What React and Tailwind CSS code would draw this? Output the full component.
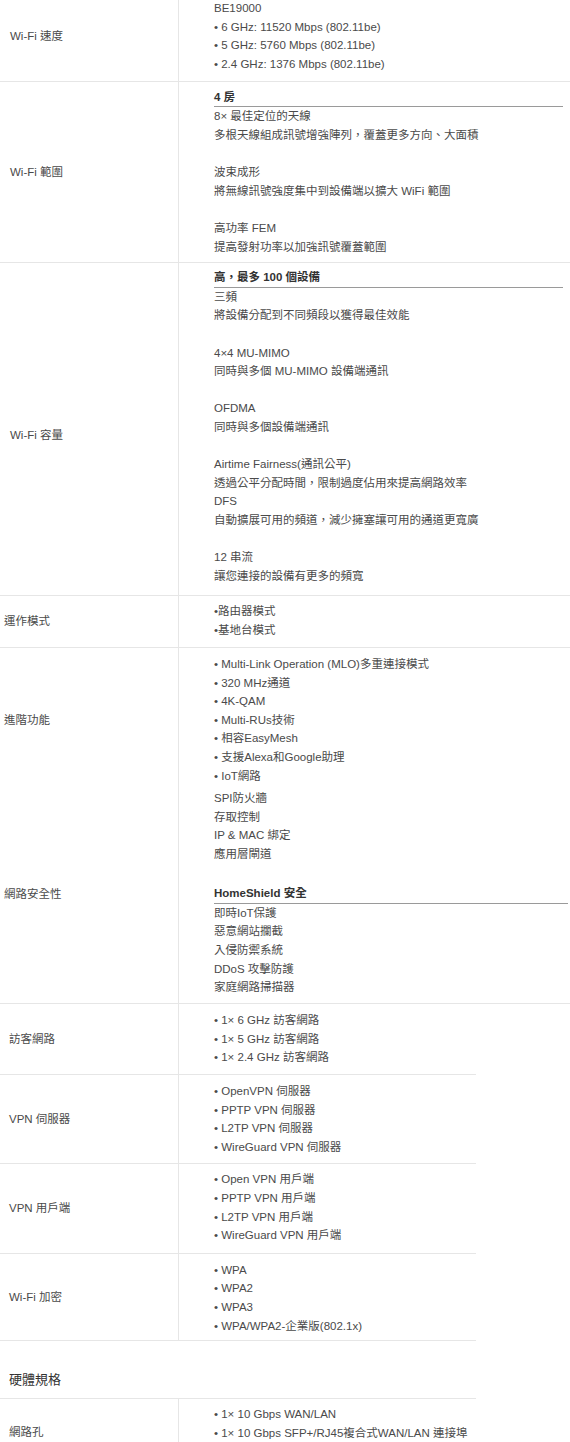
import React from "react";

const B = "border-[#e6e6e6]";

function Row({ label, labelClass = "pl-[9px]", contentClass, wide = true, border = true, children }) {
  return (
    <div className={`flex ${wide ? "w-full" : "w-[476px]"} ${border ? "border-b " + B : ""}`}>
      <div className={`w-[179px] shrink-0 border-r ${B} flex items-center ${labelClass}`}>
        <span>{label}</span>
      </div>
      <div className={`flex-1 pl-[35px] ${contentClass}`}>{children}</div>
    </div>
  );
}

const L = ({ children }) => <div className="whitespace-nowrap">{children}</div>;
const Blank = () => <div className="h-[18.6px]" />;
const H = ({ children, className = "mr-[7px]" }) => (
  <div className={`font-bold text-[#333] border-b border-[#9a9a9a] whitespace-nowrap ${className}`}>{children}</div>
);

export default function App() {
  return (
    <div className="h-[1442px] overflow-hidden bg-white text-[#4a4a4a] text-[11.5px] leading-[18.6px] font-['Liberation_Sans','Noto_Sans_CJK_TC',sans-serif]">
      <div className="-mt-[8px]">
        <Row label="Wi-Fi 速度" labelClass="pl-[10px]" contentClass="pt-[7px] pb-[7.5px]">
          <L>BE19000</L>
          <L>• 6 GHz: 11520 Mbps (802.11be)</L>
          <L>• 5 GHz: 5760 Mbps (802.11be)</L>
          <L>• 2.4 GHz: 1376 Mbps (802.11be)</L>
        </Row>
      </div>
      <Row label="Wi-Fi 範圍" labelClass="pl-[10px]" contentClass="pt-[6px] pb-[6px]">
        <H>4 房</H>
        <L>8× 最佳定位的天線</L>
        <L>多根天線組成訊號增強陣列，覆蓋更多方向、大面積</L>
        <Blank />
        <L>波束成形</L>
        <L>將無線訊號強度集中到設備端以擴大 WiFi 範圍</L>
        <Blank />
        <L>高功率 FEM</L>
        <L>提高發射功率以加強訊號覆蓋範圍</L>
      </Row>
      <Row label="Wi-Fi 容量" labelClass="pl-[10px] pt-[12px]" contentClass="pt-[5px] pb-[10px]">
        <H>高，最多 100 個設備</H>
        <L>三頻</L>
        <L>將設備分配到不同頻段以獲得最佳效能</L>
        <Blank />
        <L>4×4 MU-MIMO</L>
        <L>同時與多個 MU-MIMO 設備端通訊</L>
        <Blank />
        <L>OFDMA</L>
        <L>同時與多個設備端通訊</L>
        <Blank />
        <L>Airtime Fairness(通訊公平)</L>
        <L>透過公平分配時間，限制過度佔用來提高網路效率</L>
        <L>DFS</L>
        <L>自動擴展可用的頻道，減少擁塞讓可用的通道更寬廣</L>
        <Blank />
        <L>12 串流</L>
        <L>讓您連接的設備有更多的頻寬</L>
      </Row>
      <Row label="運作模式" labelClass="pl-[4px]" contentClass="pt-[6px] pb-[7.5px]">
        <L>•路由器模式</L>
        <L>•基地台模式</L>
      </Row>
      <Row label="進階功能" labelClass="pl-[4px] pt-[7px]" border={false} contentClass="pt-[7px]">
        <L>• Multi-Link Operation (MLO)多重連接模式</L>
        <L>• 320 MHz通道</L>
        <L>• 4K-QAM</L>
        <L>• Multi-RUs技術</L>
        <L>• 相容EasyMesh</L>
        <L>• 支援Alexa和Google助理</L>
        <L>• IoT網路</L>
      </Row>
      <Row label="網路安全性" labelClass="pl-[4px]" contentClass="pt-[4px] pb-[6.5px]">
        <L>SPI防火牆</L>
        <L>存取控制</L>
        <L>IP &amp; MAC 綁定</L>
        <L>應用層閘道</L>
        <Blank />
        <H className="mt-[2px] mr-[2px]">HomeShield 安全</H>
        <L>即時IoT保護</L>
        <L>惡意網站攔截</L>
        <L>入侵防禦系統</L>
        <L>DDoS 攻擊防護</L>
        <L>家庭網路掃描器</L>
      </Row>
      <Row label="訪客網路" wide={false} contentClass="pt-[7px] pb-[7px]">
        <L>• 1× 6 GHz 訪客網路</L>
        <L>• 1× 5 GHz 訪客網路</L>
        <L>• 1× 2.4 GHz 訪客網路</L>
      </Row>
      <Row label="VPN 伺服器" wide={false} contentClass="pt-[7px] pb-[7px]">
        <L>• OpenVPN 伺服器</L>
        <L>• PPTP VPN 伺服器</L>
        <L>• L2TP VPN 伺服器</L>
        <L>• WireGuard VPN 伺服器</L>
      </Row>
      <Row label="VPN 用戶端" wide={false} contentClass="pt-[6px] pb-[8px]">
        <L>• Open VPN 用戶端</L>
        <L>• PPTP VPN 用戶端</L>
        <L>• L2TP VPN 用戶端</L>
        <L>• WireGuard VPN 用戶端</L>
      </Row>
      <Row label="Wi-Fi 加密" wide={false} contentClass="pt-[7px] pb-[5px]">
        <L>• WPA</L>
        <L>• WPA2</L>
        <L>• WPA3</L>
        <L>• WPA/WPA2-企業版(802.1x)</L>
      </Row>
      <div className={`w-[476px] border-b ${B} pl-[9px] pt-[29px] pb-[8px] text-[13px] leading-[20px] text-[#333]`}>
        硬體規格
      </div>
      <Row label="網路孔" wide={false} border={false} contentClass="pt-[6px] pb-[24px]">
        <L>• 1× 10 Gbps WAN/LAN</L>
        <L>• 1× 10 Gbps SFP+/RJ45複合式WAN/LAN 連接埠</L>
      </Row>
    </div>
  );
}
